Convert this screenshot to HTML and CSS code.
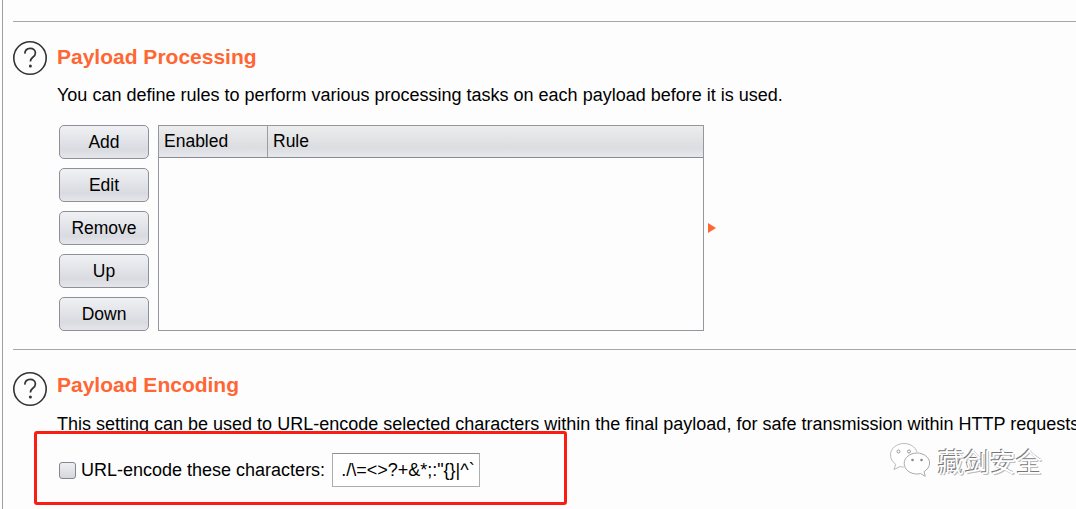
FILE: index.html
```html
<!DOCTYPE html>
<html lang="en">
<head>
  <meta charset="UTF-8" />
  <title>Payload options</title>
  <link rel="stylesheet" href="styles.css">
</head>
<body>
  <main class="panel">

    <!-- Payload processing -->
    <section class="block block-processing">
      <div class="block-head">
        <svg class="help" width="36" height="36" viewBox="0 0 36 36">
          <circle cx="18" cy="18" r="16.2" fill="none" stroke="#333" stroke-width="1.6"/>
          <path d="M12.8 13.6c.2-3.4 2.4-5.3 5.4-5.3 3 0 5.2 1.9 5.2 4.6 0 2-1 3.2-2.6 4.4-1.6 1.2-2.4 2.2-2.4 4.3" fill="none" stroke="#333" stroke-width="1.7"/>
          <circle cx="18.4" cy="26" r="1.5" fill="#333"/>
        </svg>
        <h2>Payload Processing</h2>
      </div>
      <p class="desc">You can define rules to perform various processing tasks on each payload before it is used.</p>
      <div class="rules">
        <div class="rule-buttons">
          <button>Add</button>
          <button>Edit</button>
          <button>Remove</button>
          <button>Up</button>
          <button>Down</button>
        </div>
        <div class="rule-table">
          <div class="rule-head">
            <span class="col-enabled">Enabled</span>
            <span class="col-rule">Rule</span>
          </div>
        </div>
        <span class="arrow"></span>
      </div>
    </section>

    <!-- Payload encoding -->
    <section class="block block-encoding">
      <div class="block-head">
        <svg class="help" width="36" height="36" viewBox="0 0 36 36">
          <circle cx="18" cy="18" r="16.2" fill="none" stroke="#333" stroke-width="1.6"/>
          <path d="M12.8 13.6c.2-3.4 2.4-5.3 5.4-5.3 3 0 5.2 1.9 5.2 4.6 0 2-1 3.2-2.6 4.4-1.6 1.2-2.4 2.2-2.4 4.3" fill="none" stroke="#333" stroke-width="1.7"/>
          <circle cx="18.4" cy="26" r="1.5" fill="#333"/>
        </svg>
        <h2>Payload Encoding</h2>
      </div>
      <p class="desc desc-long">This setting can be used to URL-encode selected characters within the final payload, for safe transmission within HTTP requests.</p>
      <div class="encode-row">
        <span class="checkbox"></span>
        <label>URL-encode these characters:</label>
        <span class="chars">./\=&lt;&gt;?+&amp;*;:"{}|^`</span>
      </div>
    </section>
  </main>

  <!-- red annotation -->
  <div class="red-box"></div>

  <!-- watermark -->
  <div class="watermark">
    <svg width="42" height="38" viewBox="0 0 42 38">
      <path d="M15 1.5C7.5 1.5 1.5 6.5 1.5 13c0 3.8 2 7 5.2 9.2L5 27.5l6-3c1.3.4 2.5.6 3.8.6" fill="#fff" stroke="#bbb" stroke-width="1"/>
      <path d="M15 1.5c6 0 11.4 3.4 13 8.4" fill="none" stroke="#bbb" stroke-width="1"/>
      <circle cx="9.5" cy="9.5" r="1.5" fill="none" stroke="#999"/>
      <circle cx="20" cy="9.5" r="1.5" fill="none" stroke="#999"/>
      <path d="M28 11c-7 0-12.8 4.6-12.8 10.5S21 32 28 32c1.3 0 2.4-.2 3.5-.5l4.7 2.800-1.200-4.700c3.400-1.900 5.600-5 5.600-8.600C40.600 15.600 35 11 28 11z" fill="#fff" stroke="#aaa" stroke-width="1"/>
      <circle cx="23.5" cy="18" r="1.3" fill="#888"/>
      <circle cx="32.5" cy="18" r="1.3" fill="#888"/>
    </svg>
    <span>藏剑安全</span>
  </div>
</body>
</html>
```

FILE: styles.css
```css
html, body {
  margin: 0;
  height: 509px;
  overflow: hidden;
}
body {
  position: relative;
  background-color: #fdfdfd;
  font-family: "Liberation Sans", Arial, sans-serif;
  color: #000;
}
.panel {
  height: 509px;
  margin-left: 2px;
  padding-left: 10px;
  border-left: 1px solid #a0a1a8;
  box-sizing: border-box;
  overflow: hidden;
}
.block {
  border-top: 1px solid #a5a6ad;
  white-space: nowrap;
}
.block-processing {
  margin-top: 21px;
  padding-top: 18px;
  height: 309px;
}
.block-encoding {
  padding-top: 21px;
}
.block-head {
  display: flex;
  align-items: center;
  gap: 9px;
  height: 36px;
}
.help {
  margin-left: -1px;
  flex: none;
}
h2 {
  margin: 0 0 3px;
  font-size: 21px;
  font-weight: bold;
  color: #ff6633;
}
.block-encoding h2 {
  margin-bottom: 9px;
}
.desc {
  margin: 9px 0 0 44px;
  font-size: 18px;
  line-height: 20px;
  color: #000;
}
.desc-long {
  margin-top: 7px;
}
.rules {
  display: flex;
  align-items: flex-start;
  margin: 20px 0 0 46px;
}
.rule-buttons {
  display: flex;
  flex-direction: column;
  gap: 9px;
  width: 90px;
  margin-right: 9px;
}
button {
  height: 34px;
  padding: 0;
  font-family: inherit;
  font-size: 17.5px;
  color: #000;
  background: linear-gradient(#f0f1f4, #d9dbe1 75%, #e4e6ea);
  border: 1px solid #8f9097;
  border-radius: 5px;
}
.rule-table {
  width: 544px;
  height: 204px;
  border: 1px solid #96979e;
  background-color: #fdfdfd;
}
.rule-head {
  display: flex;
  height: 31px;
  border-bottom: 1px solid #8a8b92;
  background: linear-gradient(#eceded, #dcdde0 70%, #e6e8ee);
  font-size: 17.5px;
  line-height: 30px;
}
.rule-head span {
  padding-left: 5px;
}
.col-enabled {
  width: 103px;
  border-right: 1px solid #9c9da4;
}
.arrow {
  width: 0;
  height: 0;
  margin: 98px 0 0 4px;
  border-left: 8px solid #ff6633;
  border-top: 5px solid transparent;
  border-bottom: 5px solid transparent;
}
.encode-row {
  display: flex;
  align-items: center;
  margin: 19px 0 0 46px;
  height: 34px;
}
.checkbox {
  width: 15px;
  height: 15px;
  border: 1px solid #85868d;
  border-radius: 3px;
  background: linear-gradient(#eeeff2, #d5d7de);
  margin-right: 5px;
}
label {
  font-size: 18px;
  margin-right: 7px;
}
.chars {
  width: 138px;
  height: 32px;
  padding-left: 8px;
  border: 1px solid #adadad;
  border-top-color: #8f8f8f;
  background-color: #fff;
  font-size: 18px;
  line-height: 32px;
  overflow: hidden;
}
.red-box {
  position: absolute;
  left: 34px;
  top: 431px;
  width: 527px;
  height: 68px;
  border: 3px solid #fb1c13;
  border-radius: 3px;
}
.watermark {
  position: absolute;
  left: 889px;
  top: 442px;
  display: flex;
  align-items: center;
  gap: 7px;
}
.watermark span {
  font-family: "Noto Sans CJK SC", sans-serif;
  font-size: 26px;
  line-height: 38px;
  color: #fff;
  text-shadow: -1px -1px 0 #777, 1px 1px 0 #bbb;
}
```
